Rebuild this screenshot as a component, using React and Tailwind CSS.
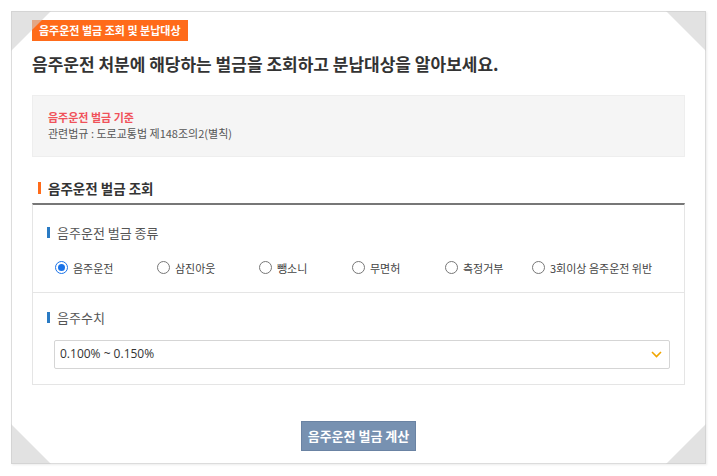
import React from 'react'

const font = { fontFamily: '"Noto Sans CJK KR", "Noto Sans", sans-serif' }

const types = [
  { label: '음주운전', w: 'w-[102px]', checked: true },
  { label: '삼진아웃', w: 'w-[102px]' },
  { label: '뺑소니', w: 'w-[93px]' },
  { label: '무면허', w: 'w-[93px]' },
  { label: '측정거부', w: 'w-[87px]' },
  { label: '3회이상 음주운전 위반', w: 'w-auto' }
]

const Corner = ({ pos, points }) => (
  <svg className={`absolute ${pos} w-[40px] h-[40px] pointer-events-none`} viewBox="0 0 40 40">
    <polygon points={points} fill="#cfcfcf" fillOpacity="0.6" />
  </svg>
)

const SubTitle = ({ children }) => (
  <div className="flex items-center gap-[7px] h-[14px]">
    <span className="w-[3px] h-[11px] bg-[#2a7bc4]" />
    <span className="text-[13px] text-[#555]">{children}</span>
  </div>
)

const App = () => {
  return (
    <div className="w-[717px] h-[476px] bg-white p-[11px]" style={font}>
      <div className="relative w-[695px] h-[453px] border border-[#dcdcdc] shadow-[1px_1px_2px_rgba(0,0,0,0.08)] bg-white pt-[4px] px-[20px]">
        {/* title tag */}
        <div className="inline-flex items-center h-[21px] px-[7px] bg-[#ff6b1a] text-white text-[11px] font-bold">
          음주운전 벌금 조회 및 분납대상
        </div>

        <h1 className="mt-[12px] text-[17px] font-bold text-[#333] leading-[22px]">
          음주운전 처분에 해당하는 벌금을 조회하고 분납대상을 알아보세요.
        </h1>

        {/* info box */}
        <div className="mt-[20px] h-[62px] bg-[#f5f5f5] border border-[#eeeeee] px-[15px] pt-[14px]">
          <p className="text-[11px] font-bold text-[#f0525a] leading-[15px]">음주운전 벌금 기준</p>
          <p className="mt-[1px] text-[11px] text-[#555] leading-[15px]">관련법규 : 도로교통법 제148조의2(별칙)</p>
        </div>

        {/* section title */}
        <div className="mt-[23px] flex items-center gap-[7px] pl-[6px] h-[16px]">
          <span className="w-[3px] h-[12px] bg-[#ff6b1a]" />
          <span className="text-[13.5px] font-bold text-[#333]">음주운전 벌금 조회</span>
        </div>

        <div className="mt-[7px] border-t-2 border-[#777] border-x border-b border-x-[#e5e5e5] border-b-[#e5e5e5]">
          <div className="px-[14px] pt-[21px] pb-[17px] border-b border-[#e5e5e5]">
            <SubTitle>음주운전 벌금 종류</SubTitle>
            <div className="mt-[21px] flex items-center pl-[8px]">
              {types.map((t, i) => (
                <label key={i} className={`flex items-center gap-[5px] ${t.w}`}>
                  <span className={`w-[13px] h-[13px] rounded-full border flex items-center justify-center bg-white ${t.checked ? 'border-[#1a73e8]' : 'border-[#777]'}`}>
                    {t.checked && <span className="w-[7px] h-[7px] rounded-full bg-[#1a73e8]" />}
                  </span>
                  <span className="text-[11px] text-[#444] leading-[14px]">{t.label}</span>
                </label>
              ))}
            </div>
          </div>
          <div className="px-[14px] pt-[18px] pb-[15px]">
            <SubTitle>음주수치</SubTitle>
            <div className="mt-[15px] ml-[7px] w-[616px] h-[29px] border border-[#d5d5d5] rounded-[2px] flex items-center justify-between px-[5px]">
              <span className="text-[12px] text-[#333]" style={{ fontFamily: '"Open Sans", "Noto Sans", sans-serif' }}>0.100% ~ 0.150%</span>
              <svg width="11" height="7" viewBox="0 0 11 7" className="mr-[2px]">
                <path d="M1 1 L5.5 5.5 L10 1" fill="none" stroke="#f0a500" strokeWidth="1.6" />
              </svg>
            </div>
          </div>
        </div>

        <div className="mt-[36px] flex justify-center">
          <button className="w-[115px] h-[30px] bg-[#7791b1] border border-[#6a83a3] text-white text-[13px] font-bold">
            음주운전 벌금 계산
          </button>
        </div>

        <Corner pos="-top-px -left-px" points="0,0 40,0 0,40" />
        <Corner pos="-top-px -right-px" points="0,0 40,0 40,40" />
        <Corner pos="-bottom-px -left-px" points="0,0 40,40 0,40" />
        <Corner pos="-bottom-px -right-px" points="40,0 40,40 0,40" />
      </div>
    </div>
  )
}

export default App
